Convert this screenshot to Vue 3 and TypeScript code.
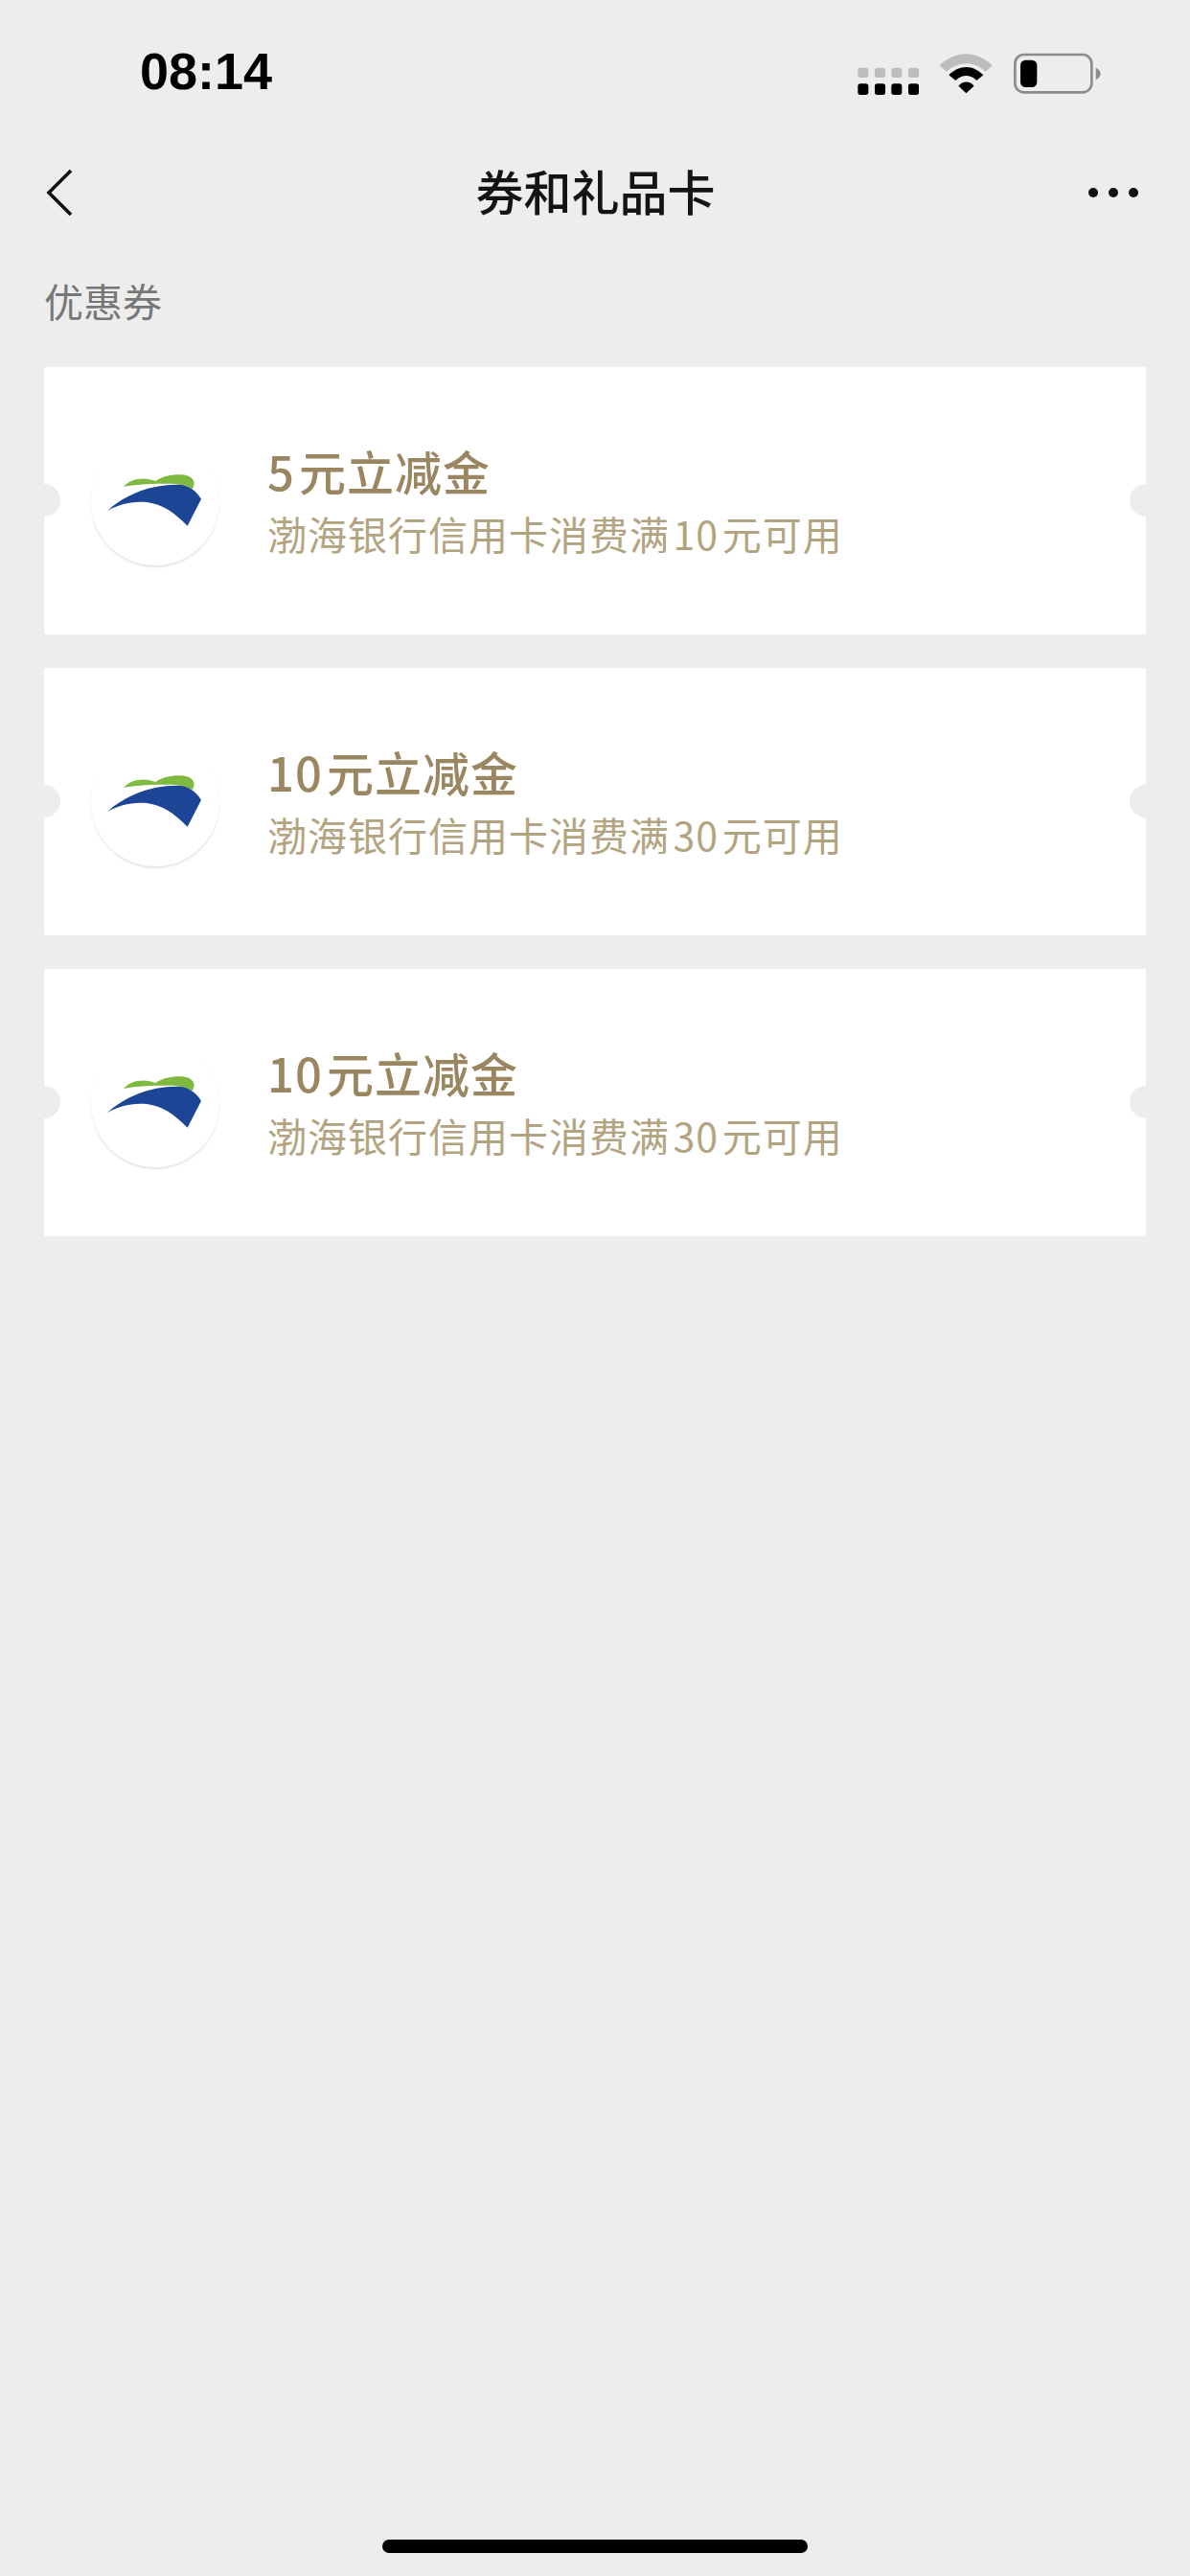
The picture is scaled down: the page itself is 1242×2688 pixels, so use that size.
<script setup lang="ts">
interface Coupon {
  id: number
  title: string
  desc: string
}

// hair spaces: the app leaves a small gap between digits and hanzi
const coupons: Coupon[] = [
  { id: 1, title: '5\u200a元立减金', desc: '渤海银行信用卡消费满\u200a10\u200a元可用' },
  { id: 2, title: '10\u200a元立减金', desc: '渤海银行信用卡消费满\u200a30\u200a元可用' },
  { id: 3, title: '10\u200a元立减金', desc: '渤海银行信用卡消费满\u200a30\u200a元可用' }
]

// signal dots, two rows of four
const signalCols = [163, 216, 268, 321]
</script>

<template>
  <div class="page">
    <!-- Status bar -->
    <div class="status-bar">
      <span class="time">08:14</span>
      <svg class="status-icons" viewBox="0 0 960 240" width="320" height="80">
        <g v-for="c in signalCols" :key="c">
          <rect :x="c" y="110" width="33" height="31" rx="8" fill="#bdbdbd" />
          <rect :x="c" y="160" width="33" height="35" rx="8" fill="#000" />
        </g>
        <path d="M418 103 C470 55 535 55 585 103 L563 122 C525 88 480 88 441 122Z" fill="#bdbdbd" />
        <path d="M448 133 C480 100 525 100 556 133 L535 150 C515 130 490 130 469 150Z" fill="#000" />
        <path d="M478 167 C490 150 515 150 527 167 L502 190Z" fill="#000" />
        <rect x="655" y="69" width="240" height="118" rx="28" fill="none" stroke="#8c8c8c" stroke-width="8" />
        <rect x="672" y="86" width="52" height="85" rx="16" fill="#000" />
        <path d="M908 110 C918 114 923 122 923 129 C923 136 918 143 908 148Z" fill="#8c8c8c" />
      </svg>
    </div>

    <!-- Nav bar -->
    <header class="nav">
      <svg class="back" viewBox="0 0 30 50" width="30" height="50">
        <path d="M27 2 L4 25 L27 48" fill="none" stroke="#111" stroke-width="3.6" />
      </svg>
      <h1 class="nav-title">券和礼品卡</h1>
      <div class="more">
        <span></span><span></span><span></span>
      </div>
    </header>

    <p class="section-label">优惠券</p>

    <!-- Coupons -->
    <div class="coupon-list">
      <div v-for="c in coupons" :key="c.id" class="coupon">
        <div class="logo">
          <svg viewBox="195 258 402 402" width="134" height="134">
            <path d="M297 414 C315 390 360 380 397 396 C420 378 470 370 500 380 C520 390 522 405 512 420 C490 408 470 404 440 404 C390 404 340 405 297 414Z" fill="#7fb93f" />
            <path d="M246 489 C300 440 380 405 470 407 C495 408 520 420 540 452 L497 536 C450 490 420 470 370 462 C320 458 280 470 246 489Z" fill="#1c4695" />
          </svg>
        </div>
        <div class="coupon-text">
          <div class="coupon-title">{{ c.title }}</div>
          <div class="coupon-desc">{{ c.desc }}</div>
        </div>
      </div>
    </div>

    <div class="home-indicator"></div>
  </div>
</template>

<style>
html,
body {
  margin: 0;
  background: #ededed;
}
</style>

<style scoped>
.page {
  display: flex;
  flex-direction: column;
  min-height: 2688px;
  background: #ededed;
  font-family: "Noto Sans CJK SC", "Liberation Sans", sans-serif;
  box-sizing: border-box;
}
.status-bar {
  height: 148px;
  display: flex;
  align-items: center;
  justify-content: space-between;
  padding: 0 81px 0 146px;
}
.time {
  font-family: "Liberation Sans", sans-serif;
  font-size: 54px;
  font-weight: 700;
  color: #000;
}
.status-icons {
  display: block;
}
.nav {
  height: 106px;
  display: grid;
  grid-template-columns: 1fr auto 1fr;
  align-items: center;
  padding: 0 50px 0 51px;
}
.back {
  display: block;
  margin-left: -4px;
}
.nav-title {
  margin: 0;
  font-size: 50px;
  line-height: 60px;
  font-weight: 500;
  color: #141414;
  position: relative;
  top: -3px;
}
.more {
  display: flex;
  justify-self: end;
  gap: 11px;
  margin-right: 4px;
}
.more span {
  width: 10px;
  height: 10px;
  border-radius: 50%;
  background: #111;
}
.section-label {
  margin: 29px 0 0 46px;
  height: 60px;
  line-height: 60px;
  font-size: 41px;
  color: #777;
}
.coupon-list {
  margin: 40px 46px 0;
  display: flex;
  flex-direction: column;
  gap: 35px;
}
.coupon {
  position: relative;
  height: 279px;
  background: #fff;
  border-radius: 2px;
  overflow: hidden;
  display: flex;
  align-items: center;
  padding-left: 49px;
  gap: 49px;
}
.coupon::before,
.coupon::after {
  content: "";
  position: absolute;
  top: 122px;
  width: 34px;
  height: 34px;
  border-radius: 50%;
  background: #ededed;
}
.coupon::before {
  left: -17px;
}
.coupon::after {
  right: -17px;
}
.logo {
  width: 134px;
  height: 134px;
  border-radius: 50%;
  background: #fff;
  box-shadow: 0 2px 2px rgba(0, 0, 0, 0.1);
}
.logo svg {
  display: block;
}
.coupon-text {
  display: flex;
  flex-direction: column;
  gap: 10px;
  margin: 0 0 4px 1px;
}
.coupon-title {
  font-size: 49px;
  line-height: 60px;
  font-weight: 500;
  color: #9a8660;
  letter-spacing: 1px;
}
.coupon-desc {
  font-size: 41px;
  line-height: 50px;
  color: #b3a481;
  letter-spacing: 1px;
}
.home-indicator {
  margin: auto auto 24px;
  width: 444px;
  height: 14px;
  border-radius: 7px;
  background: #000;
}
</style>
